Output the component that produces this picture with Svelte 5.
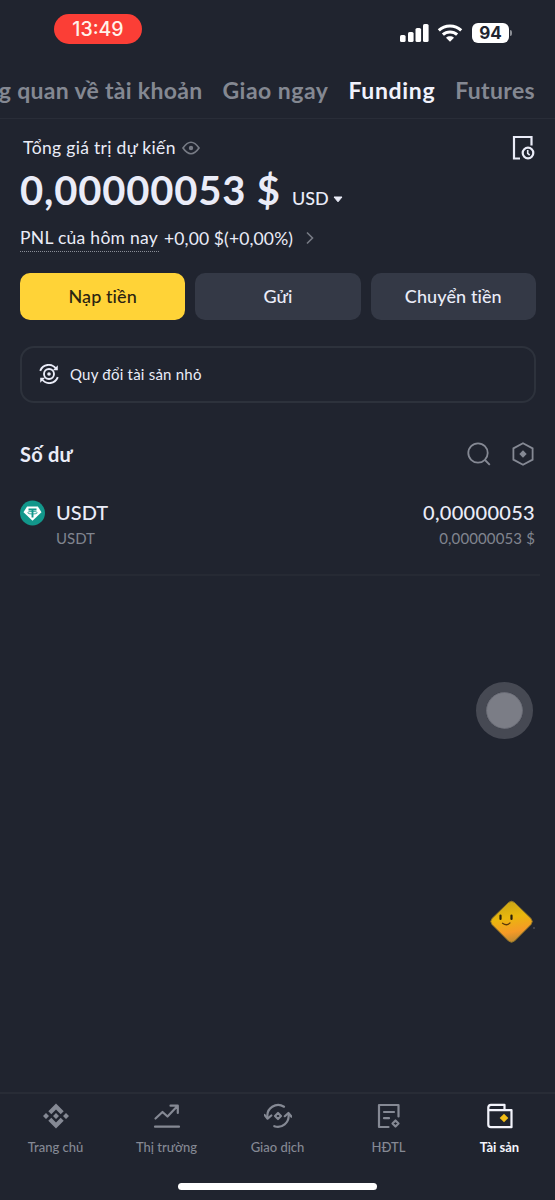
<script>
  let tabs = [
    { name: "Tổng quan về tài khoản", spacing: 0.3 },
    { name: "Giao ngay", spacing: 0.5 },
    { name: "Funding", spacing: 0.65 },
    { name: "Futures", spacing: 0.35 }
  ];
  let activeTab = "Funding";

  let actions = [
    { label: "Nạp tiền", primary: true },
    { label: "Gửi" },
    { label: "Chuyển tiền" }
  ];

  let assets = [
    { symbol: "USDT", name: "USDT", amount: "0,00000053", value: "0,00000053 $" }
  ];

  let nav = [
    { id: "home", label: "Trang chủ" },
    { id: "market", label: "Thị trường" },
    { id: "trade", label: "Giao dịch" },
    { id: "futures", label: "HĐTL" },
    { id: "wallet", label: "Tài sản" }
  ];
  let activeNav = "wallet";
</script>

<div class="screen">
  <header class="status">
    <div class="time">13:49</div>
    <div class="indicators">
      <svg class="signal" width="30" height="20" viewBox="0 0 30 20">
        <rect x="0" y="12" width="5.6" height="7" rx="1.6" />
        <rect x="8" y="9" width="5.6" height="10" rx="1.6" />
        <rect x="15.5" y="5" width="5.6" height="14" rx="1.6" />
        <rect x="23" y="1" width="5.6" height="18" rx="1.6" />
      </svg>
      <svg class="wifi" width="26" height="20" viewBox="0 0 26 20">
        <path d="M1.8 7.4C8 1.4 18 1.4 24.2 7.4" />
        <path d="M5.9 11.7C9.8 8 16.2 8 20.1 11.7" />
        <path class="dot" d="M9 14.7c2.3-1.9 5.7-1.9 8 0l-4 4.1z" />
      </svg>
      <div class="battery">94</div>
      <span class="battery-tip"></span>
    </div>
  </header>

  <nav class="tabs">
    {#each tabs as tab}
      <span class="tab" class:active={tab.name === activeTab} style={`letter-spacing: ${tab.spacing}px`}>{tab.name}</span>
    {/each}
  </nav>

  <main>
    <div class="label-row">
      <span class="label">Tổng giá trị dự kiến</span>
      <svg class="eye" width="18" height="14" viewBox="0 0 18 14">
        <path d="M1 7Q9-4.5 17 7Q9 18.5 1 7z" />
        <circle class="fill" cx="9" cy="7" r="2.2" />
      </svg>
      <svg class="history" width="24" height="26" viewBox="0 0 24 26">
        <path d="M9 23.5H3V2H20.5V10.5" />
        <circle cx="17" cy="18" r="5.3" />
        <path class="hand" d="M16.7 15v3.3l2 1.8" />
      </svg>
    </div>

    <div class="balance">
      <span class="total">0,00000053 $</span>
      <span class="currency">USD</span>
      <svg class="caret" width="10" height="9" viewBox="0 0 10 9"><path d="M1 1h8L5 5.8z" /></svg>
    </div>

    <div class="pnl">
      <span class="pnl-label">PNL của hôm nay</span>
      <span class="pnl-value">+0,00 $(+0,00%)</span>
      <svg class="chevron" width="8" height="14" viewBox="0 0 8 14"><path d="M1 1.5L6.5 7L1 12.5" /></svg>
    </div>

    <div class="actions">
      {#each actions as action}
        <button class:primary={action.primary}>{action.label}</button>
      {/each}
    </div>

    <div class="convert">
      <svg width="20" height="20" viewBox="0 0 20 20">
        <circle cx="10" cy="10" r="5" />
        <circle class="fill" cx="10" cy="10" r="1.8" />
        <path d="M1.2 6.8C4-.2 12.5-.9 16.8 4.5M18.8 13.2C16 20.2 7.5 20.9 3.2 15.5" />
        <path class="fill" d="M18.8 1.2V6.3H13.9zM1.2 18.8V13.7H6.1z" />
      </svg>
      <span>Quy đổi tài sản nhỏ</span>
    </div>

    <div class="section">
      <h2>Số dư</h2>
      <svg width="24" height="24" viewBox="0 0 24 24">
        <circle cx="11" cy="11" r="9.7" />
        <path d="M18 18L22.8 22.8" />
      </svg>
      <svg width="24" height="24" viewBox="0 0 24 24">
        <path d="M12 1.2L21.6 6.4V17.6L12 22.8L2.4 17.6V6.4z" />
        <path class="fill" d="M12 8.3L15.7 12L12 15.7L8.3 12z" />
      </svg>
    </div>

    {#each assets as asset}
      <div class="asset">
        <svg class="coin" width="26" height="26" viewBox="0 0 26 26">
          <circle cx="12.5" cy="13" r="12.5" fill="#12978b" />
          <path d="M7.1 6.5H17.9L21.5 12.2L12.5 20.8L3.5 12.2z" fill="#fff" />
          <path d="M8.5 9.5H16.5M12.5 9.5V17.5" stroke="#12978b" stroke-width="1.9" fill="none" />
          <ellipse cx="12.5" cy="12.7" rx="4.8" ry="1.3" stroke="#12978b" stroke-width=".8" fill="none" />
        </svg>
        <div class="names">
          <strong>{asset.symbol}</strong>
          <span class="sub">{asset.name}</span>
        </div>
        <div class="amounts">
          <strong>{asset.amount}</strong>
          <span class="sub">{asset.value}</span>
        </div>
      </div>
    {/each}
  </main>

  <div class="touch"></div>

  <svg class="mascot" width="46" height="46" viewBox="0 0 46 46">
    <defs>
      <linearGradient id="body" x1=".35" y1="0" x2=".55" y2="1">
        <stop offset="0" stop-color="#c9a516" />
        <stop offset=".4" stop-color="#eab70d" />
        <stop offset=".75" stop-color="#f59a27" />
        <stop offset="1" stop-color="#bd8a32" />
      </linearGradient>
    </defs>
    <path d="M19.5 3.5Q22.5 1 25.5 3.5L42 19.5Q44.5 22.5 42 25.5L25.5 42Q22.5 44.5 19.5 42L3 25.5Q.5 22.5 3 19.5z" fill="url(#body)" stroke="#8d7429" stroke-width="1" />
    <path d="M11.5 16.5v3.5M22.5 16.5v3.5" stroke="#29200d" stroke-width="2.2" stroke-linecap="round" />
    <path d="M13.5 24.300q4.500 3 7.500-.4" fill="none" stroke="#5b3909" stroke-width="1.3" stroke-linecap="round" />
    <circle cx="45" cy="29" r=".8" fill="#666a72" />
  </svg>

  <footer>
    <div class="nav">
      {#each nav as item}
        <div class="nav-item" class:active={item.id === activeNav}>
          <svg width="28" height="28" viewBox="0 0 28 28">
            {#if item.id === "home"}
              <g class="fill">
                <path d="M14 1.5L21.7 9.2L18.7 12.2L14 7.5L9.3 12.2L6.3 9.2z" />
                <path d="M14 26.5L21.7 18.8L18.7 15.8L14 20.5L9.3 15.8L6.3 18.8z" />
                <path d="M14 11L17 14L14 17L11 14zM4 11L7 14L4 17L1 14zM24 11L27 14L24 17L21 14z" />
              </g>
            {:else if item.id === "market"}
              <path d="M2.5 16.5L9.5 10L14.5 14.5L24 4.5M17.5 3.7H24.8V11M2 24.7H26" />
            {:else if item.id === "trade"}
              <path d="M3.5 15.5A10.8 10.8 0 0 1 20 4.7M24.5 12.5A10.8 10.8 0 0 1 10.3 24.2" />
              <path d="M.5 13L3.6 16.7L7.3 13.5M20.8 14.2L24.4 11L27.5 14.7" />
              <path d="M14 11L17 14L14 17L11 14z" />
            {:else if item.id === "futures"}
              <path d="M13.5 25H4V3H23.5V14.5M9 10H19M9 16.2H14" />
              <path d="M20.5 18.5L23.5 21.5L20.5 24.5L17.5 21.5z" />
            {:else}
              <path d="M18.5 7.5V2.8H5Q2.3 2.8 2.3 5.5V22.5Q2.3 25.2 5 25.2H25.5V8.2H3" />
              <path class="coin-mark" d="M18 11.7L22.3 16L18 20.3L13.7 16z" />
            {/if}
          </svg>
          <span>{item.label}</span>
        </div>
      {/each}
    </div>
    <div class="home-bar"></div>
  </footer>
</div>

<style>
  :global(body) {
    background: #20242f;
  }
  .screen {
    position: relative;
    display: flex;
    flex-direction: column;
    width: 555px;
    height: 1200px;
    overflow: hidden;
    box-sizing: border-box;
    background: #20242f;
    color: #eaecf8;
    font-family: Lato, "Noto Sans", sans-serif;
  }
  svg {
    display: block;
    flex: none;
    fill: none;
    stroke: currentColor;
  }
  .fill {
    fill: currentColor;
    stroke: none;
  }

  /* status bar */
  .status {
    display: flex;
    justify-content: space-between;
    height: 62px;
    padding: 14px 43px 0 54px;
    box-sizing: border-box;
  }
  .time {
    width: 88px;
    height: 30px;
    border-radius: 15px;
    background: #fb3e36;
    color: #fff3ea;
    font: 500 19.5px/30px Inter, sans-serif;
    text-align: center;
  }
  .indicators {
    display: flex;
    align-items: center;
    height: 37px;
    color: #fff;
  }
  .signal {
    fill: #fff;
    stroke: none;
  }
  .wifi {
    margin: 0 9px 0 7px;
    stroke-width: 3;
  }
  .wifi .dot {
    fill: #fff;
    stroke: none;
  }
  .battery {
    width: 37px;
    height: 20px;
    border-radius: 6px;
    background: #fff;
    color: #20242f;
    font: 700 17px/20px Inter, sans-serif;
    text-align: center;
  }
  .battery-tip {
    width: 2px;
    height: 6px;
    margin-left: 1px;
    border-radius: 0 2px 2px 0;
    background: #8b8e95;
  }

  .tabs {
    display: flex;
    justify-content: flex-end;
    gap: 20px;
    height: 57px;
    padding-right: 20px;
    box-sizing: border-box;
    border-bottom: 1px solid #292d38;
    white-space: nowrap;
  }
  .tab {
    color: #848892;
    font-size: 23px;
    font-weight: 700;
    line-height: 56px;
  }
  .tab.active {
    color: #f1f2fc;
  }

  main {
    padding: 0 20px;
  }
  .label-row {
    display: flex;
    align-items: center;
    height: 28px;
    margin-top: 15px;
    padding-left: 3px;
  }
  .label {
    width: 153px;
    font-size: 17.5px;
    letter-spacing: 0.32px;
    line-height: 26px;
    white-space: nowrap;
  }
  .eye {
    margin-left: 6px;
    color: #777b85;
    stroke-width: 1.7;
  }
  .history {
    margin-left: auto;
    stroke-width: 2.2;
  }
  .hand {
    stroke-width: 1.6;
  }

  .balance {
    display: flex;
    align-items: baseline;
    height: 56px;
    line-height: 56px;
    white-space: nowrap;
  }
  .total {
    width: 272px;
    font-size: 40px;
    font-weight: 700;
    letter-spacing: 0.8px;
  }
  .currency {
    width: 37px;
    font-size: 18px;
    font-weight: 500;
  }
  .caret {
    margin-left: 4px;
    fill: currentColor;
  }

  .pnl {
    display: flex;
    align-items: center;
    height: 28px;
    margin-top: 6px;
    font-size: 17.5px;
    white-space: nowrap;
  }
  .pnl-label {
    width: 139px;
    margin-right: 5px;
    letter-spacing: 0.28px;
    line-height: 26px;
    border-bottom: 1px dotted #8a8e98;
  }
  .pnl-value {
    width: 131px;
    letter-spacing: 0.13px;
  }
  .chevron {
    margin-left: 11px;
    color: #777b85;
    stroke-width: 1.6;
  }

  .actions {
    display: grid;
    grid-template-columns: repeat(3, 1fr);
    gap: 10px;
    width: 516px;
    margin-top: 21px;
  }
  button {
    height: 47px;
    padding: 0;
    border: 0;
    border-radius: 10px;
    background: #343946;
    color: #eaecf8;
    font: 500 18px/47px Lato, "Noto Sans", sans-serif;
    letter-spacing: 0.1px;
  }
  button.primary {
    background: #ffd337;
    color: #2b2412;
  }

  .convert {
    display: flex;
    align-items: center;
    gap: 11px;
    width: 516px;
    height: 57px;
    margin-top: 26px;
    padding: 0 0 1px 17px;
    box-sizing: border-box;
    border: 2px solid #2d323c;
    border-radius: 14px;
    font-size: 15px;
    letter-spacing: 0.22px;
  }
  .convert svg {
    stroke-width: 1.9;
  }

  .section {
    display: flex;
    align-items: center;
    height: 30px;
    margin-top: 36px;
    color: #858994;
  }
  h2 {
    margin: 0 auto 0 0;
    color: #eaecf8;
    font-size: 20px;
    letter-spacing: 0.2px;
    line-height: 30px;
  }
  .section svg {
    margin-left: 20px;
    stroke-width: 1.8;
  }

  .asset {
    display: flex;
    height: 76px;
    margin: 29px -5px 0 0;
    padding-right: 5px;
    border-bottom: 2px solid #262a34;
  }
  .coin {
    margin-top: 2px;
    stroke: none;
  }
  .names,
  .amounts {
    display: flex;
    flex-direction: column;
  }
  .names {
    margin-left: 10px;
  }
  .amounts {
    margin-left: auto;
    align-items: flex-end;
  }
  .amounts strong {
    letter-spacing: 0.3px;
  }
  .amounts .sub {
    letter-spacing: 0.13px;
  }
  strong {
    font-size: 20px;
    font-weight: 500;
    line-height: 28px;
  }
  .sub {
    color: #81858f;
    font-size: 15px;
    line-height: 24px;
  }

  /* floating controls */
  .touch {
    position: absolute;
    left: 476px;
    top: 682px;
    width: 37px;
    height: 37px;
    border: 10px solid #464953;
    border-radius: 50%;
    background: #7b7d86;
    background-clip: padding-box;
    box-shadow: inset 0 0 0 1px #686a74;
  }
  .mascot {
    position: absolute;
    left: 489px;
    top: 899px;
    stroke: none;
  }

  footer {
    margin-top: auto;
    height: 108px;
    box-sizing: border-box;
    border-top: 2px solid #282c36;
  }
  .nav {
    display: grid;
    grid-template-columns: repeat(5, 1fr);
  }
  .nav-item {
    display: flex;
    flex-direction: column;
    align-items: center;
    padding-top: 8px;
    color: #858994;
    font-size: 13px;
    font-weight: 500;
  }
  .nav-item svg {
    stroke-width: 2.2;
    stroke-linejoin: round;
    stroke-linecap: round;
  }
  .nav-item span {
    margin-top: 7px;
    line-height: 20px;
  }
  .nav-item.active {
    color: #f3f4fc;
    font-weight: 700;
  }
  .coin-mark {
    fill: #f2bd16;
    stroke: none;
  }
  .home-bar {
    width: 199px;
    height: 7px;
    margin: 26px auto 0;
    border-radius: 4px;
    background: #fff;
  }
</style>
